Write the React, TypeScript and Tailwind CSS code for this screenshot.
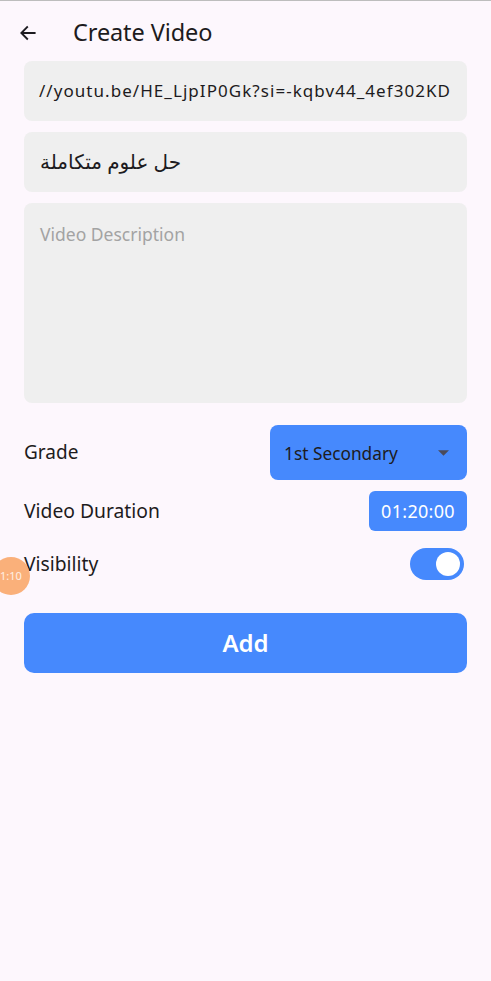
import { useState } from 'react'

export default function App() {
  const [visible, setVisible] = useState(true)

  return (
    <div
      className="relative h-[981px] w-[491px] overflow-hidden border-t border-[#bdbdbd] bg-[#fdf7fd] text-[#1d1b20]"
      style={{ fontFamily: '"Noto Sans", "DejaVu Sans", sans-serif' }}
    >
      {/* App bar */}
      <div className="flex h-[60px] items-center pl-4 pt-[4px]">
        <button className="flex h-6 w-6 items-center justify-center">
          <svg width="20" height="20" viewBox="0 0 24 24" fill="none">
            <path d="M20 12H5M11 5l-7 7 7 7" stroke="#1d1b20" strokeWidth="2.2" strokeLinecap="square" />
          </svg>
        </button>
        <h1 className="ml-[33px] text-[23.5px] leading-none tracking-[-0.1px]">Create Video</h1>
      </div>

      <div className="flex flex-col px-6">
        {/* Link */}
        <div className="flex h-[60px] items-center rounded-lg bg-[#efefef] px-4">
          <div className="flex w-full justify-end">
            <span className="text-[17px] whitespace-nowrap tracking-[1.05px]" dir="ltr">
              //youtu.be/HE_LjpIP0Gk?si=-kqbv44_4ef302KD
            </span>
          </div>
        </div>

        {/* Title */}
        <div className="mt-[11px] flex h-[60px] items-center rounded-lg bg-[#efefef] px-4">
          <span className="text-[20px]" dir="rtl">حل علوم متكاملة</span>
        </div>

        {/* Description */}
        <div className="mt-[11px] h-[200px] rounded-lg bg-[#efefef] px-4 pt-[18px]">
          <span className="text-[17.5px] text-[#a3a3a3]">Video Description</span>
        </div>

        {/* Grade */}
        <div className="mt-[22px] flex items-center justify-between">
          <span className="text-[19px]">Grade</span>
          <div className="flex h-[55px] w-[197px] items-center justify-between rounded-lg bg-[#4689fd] pl-[14px] pr-[18px]">
            <span className="pt-[2px] text-[17.3px] text-[#1d1b20]">1st Secondary</span>
            <svg width="11" height="6" viewBox="0 0 10 5">
              <path d="M0 0h10L5 5z" fill="#4a4a5a" />
            </svg>
          </div>
        </div>

        {/* Duration */}
        <div className="mt-[11px] flex items-center justify-between">
          <span className="text-[19.3px]">Video Duration</span>
          <div className="flex h-[40px] w-[98px] items-center justify-center rounded-md bg-[#4689fd]">
            <span className="text-[18px] tracking-[0.3px] text-white">01:20:00</span>
          </div>
        </div>

        {/* Visibility */}
        <div className="mt-[17px] flex items-center justify-between">
          <span className="text-[19.3px]">Visibility</span>
          <button
            onClick={() => setVisible(!visible)}
            className="mr-[3px] flex h-[32px] w-[54px] items-center justify-end rounded-full bg-[#4689fd] px-[4px]"
          >
            <span className="h-[24px] w-[24px] rounded-full bg-white" />
          </button>
        </div>

        {/* Add */}
        <button className="mt-[33px] flex h-[60px] items-center justify-center rounded-[10px] bg-[#4689fd]">
          <span className="text-[24px] font-semibold text-white">Add</span>
        </button>
      </div>

      {/* touch indicator */}
      <div className="absolute left-[-8px] top-[556px] flex h-[38px] w-[38px] items-center justify-center rounded-full bg-[#f9a76c]/90">
        <span className="text-[11px] text-white/80">1:10</span>
      </div>
    </div>
  )
}
